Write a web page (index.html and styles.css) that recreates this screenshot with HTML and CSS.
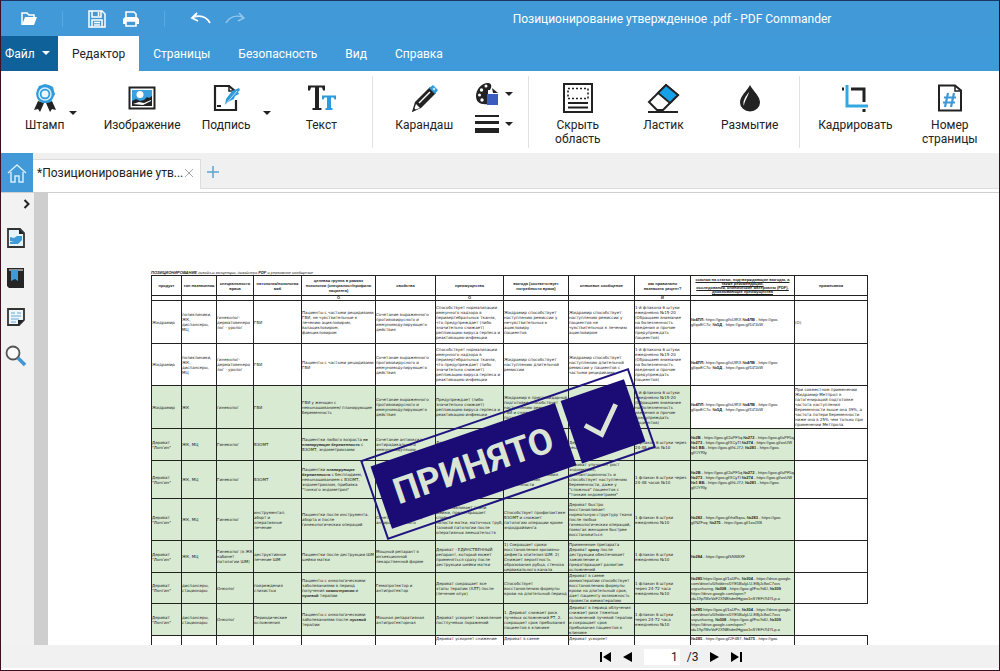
FILE: index.html
```html
<!DOCTYPE html>
<html lang="ru">
<head>
    <meta charset="UTF-8">
    <meta name="viewport" content="width=device-width, initial-scale=1.0">
    <title>Позиционирование утвержденное .pdf - PDF Commander</title>
    <link rel="stylesheet" href="styles.css">
</head>
<body>
    <header class="titlebar">
        <div class="quick">
            <button class="open" aria-label="Открыть">
                <svg width="18" height="16" viewBox="0 0 18 16"><path d="M2 14V2h5l2 2h5v2" fill="none" stroke="#fff" stroke-width="1.5"/><path d="M5 6h12l-3 8H2z" fill="#fff"/></svg>
            </button>
            <span class="line"></span>
            <button class="save" aria-label="Сохранить">
                <svg width="18" height="18" viewBox="0 0 18 18"><path d="M1 1h13l3 3v13H1zM4 1v6h9V1M4 17v-7h10v7M6 12.500h6M6 15h6M10.500 2v4" fill="none" stroke="#fff" stroke-width="1.5"/></svg>
            </button>
            <button class="print" aria-label="Печать">
                <svg width="18" height="18" viewBox="0 0 18 18"><path d="M4 7V2h8l2 2v3" fill="none" stroke="#fff" stroke-width="1.600"/><path d="M3 7h12l2 2v5h-3v-3H4v3H1V9z" fill="#fff"/><path d="M4 11h10v5H4z" fill="none" stroke="#fff" stroke-width="1.600"/></svg>
            </button>
            <span class="line"></span>
            <button class="undo" aria-label="Отменить">
                <svg width="22" height="14" viewBox="0 0 22 14"><path d="M7 1L2 6l6 3M2.500 5.500C9 3 16 4 20 11" fill="none" stroke="#fff" stroke-width="1.800"/></svg>
            </button>
            <button class="redo" aria-label="Повторить">
                <svg width="22" height="14" viewBox="0 0 22 14"><path d="M15 1l5 5-6 3M19.500 5.500C13 3 6 4 2 11" fill="none" stroke="#8fc6ee" stroke-width="1.500"/></svg>
            </button>
        </div>
        <h1>Позиционирование утвержденное .pdf - PDF Commander</h1>
    </header>

    <nav class="menu">
        <button class="file">Файл <i class="arrow"></i></button>
        <button class="active">Редактор</button>
        <button>Страницы</button>
        <button>Безопасность</button>
        <button>Вид</button>
        <button>Справка</button>
    </nav>

    <div class="ribbon">
        <div class="group insert">
            <div class="split first">
                <button class="tool">
                    <svg width="30" height="32" viewBox="0 0 30 32"><path d="M8 19l-4 9 4-1 2 3 4-9zM22 19l4 9-4-1-2 3-4-9z" fill="#222"/><path d="M15 2l4 1 4 2 1 4 1 3-2 4-2 4-4 1h-4l-4-2-2-3-1-4 1-4 2-4 3-1z" fill="#2f9bdc"/><circle cx="15" cy="12" r="6" fill="none" stroke="#d9f0fc" stroke-width="1.500"/><circle cx="15" cy="12" r="3.500" fill="#e8f6fd"/></svg>
                    <span>Штамп</span>
                </button>
                <button class="drop" aria-label="Выбрать штамп"><i class="arrow"></i></button>
            </div>
            <button class="tool">
                <svg width="30" height="32" viewBox="0 0 30 32"><path d="M2.500 5.500h25v21h-25z" fill="#fff" stroke="#222" stroke-width="2"/><path d="M5 8h20v16H5z" fill="#3aa0e0"/><circle cx="13" cy="12.500" r="3.500" fill="#fff"/><path d="M5 19l4-2 4 2 4-1 3-3 2 1 3-2v10H5z" fill="#222"/><path d="M6 22l6-2 5 1 7-3v1l-8 4z" fill="#fff"/></svg>
                <span>Изображение</span>
            </button>
            <div class="split">
                <button class="tool">
                    <svg width="30" height="32" viewBox="0 0 30 32"><path d="M25 18v10H4V4h14l6 5" fill="none" stroke="#222" stroke-width="2.200"/><path d="M18 3v6h5" fill="none" stroke="#222" stroke-width="1.500"/><path d="M14 23l1-6 6-8 7-3 1 2-2 2 1 2-4 2-1 3-6 3z" fill="#2f9bdc"/><path d="M14 23L26 9" stroke="#bfe3f7"/><path d="M6 24h4" stroke="#222" stroke-width="2"/></svg>
                    <span>Подпись</span>
                </button>
                <button class="drop" aria-label="Выбрать подпись"><i class="arrow"></i></button>
            </div>
            <button class="tool">
                <svg width="30" height="32" viewBox="0 0 30 32"><path d="M2 3.500h17v5h-2l-1-3h-3V26h2.500v2h-9v-2H9V5.500H5l-1 3H2z" fill="#222"/><path d="M16 13.500h14v4h-1.500l-1-2H25V26h1.500v2h-7v-2H21V15.500h-2.500l-1 2H16z" fill="#2f9bdc"/></svg>
                <span>Текст</span>
            </button>
        </div>
        <div class="group draw">
            <button class="tool">
                <svg width="30" height="32" viewBox="0 0 30 32"><path d="M3 30l3-10L21 5l6 6-15 15z" fill="#222"/><path d="M5 28l2-6 4 4z" fill="#fff"/><path d="M3 30l2-4 2 2z" fill="#222"/><path d="M10 21L21 10" stroke="#fff" stroke-width="1.500"/><path d="M20 6l4-3 5 5-3 4z" fill="#2f9bdc"/><circle cx="25" cy="7" r="1.300" fill="#bfe3f7"/></svg>
                <span>Карандаш</span>
            </button>
            <div class="options">
                <button aria-label="Цвет">
                    <svg width="24" height="24" viewBox="0 0 24 24"><path d="M15 8c2-3 2-7-2-7C6 1 1 8 1 14c0 6 4 9 12 8V8z" fill="#222"/><g fill="#fff"><circle cx="11" cy="4" r="1.500"/><circle cx="6.500" cy="8" r="1.700"/><circle cx="4.500" cy="13" r="1.500"/><circle cx="7" cy="18" r="1.700"/></g><path d="M12 12h11v11H12z" fill="#3b5bbf"/><path d="M17 6l6 5h-5z" fill="#222"/></svg>
                    <i class="arrow"></i>
                </button>
                <button aria-label="Толщина">
                    <svg width="24" height="20" viewBox="0 0 24 20"><path d="M0 1h24v2H0zM0 7h24v3H0zM0 14h24v5H0z" fill="#222"/></svg>
                    <i class="arrow"></i>
                </button>
            </div>
        </div>
        <div class="group hide">
            <button class="tool">
                <svg width="32" height="32" viewBox="0 0 32 32"><path d="M2 2h28v28H2z" fill="none" stroke="#222" stroke-width="2"/><path d="M6 6.500h20v10H6z" fill="none" stroke="#222" stroke-width="1.600" stroke-dasharray="2 2"/><path d="M6 21h20M6 25.500h20" stroke="#222" stroke-width="2"/></svg>
                <span>Скрыть<br>область</span>
            </button>
            <button class="tool">
                <svg width="34" height="32" viewBox="0 0 34 32"><path d="M3 20L20 3l12 10-15 15h-6z" fill="#fff" stroke="#222" stroke-width="2"/><path d="M20 3l12 10-8 8-12-10z" fill="#15a0e8" stroke="#222" stroke-width="1.800"/><path d="M2 30h30" stroke="#222" stroke-width="2"/></svg>
                <span>Ластик</span>
            </button>
            <button class="tool">
                <svg width="24" height="32" viewBox="0 0 24 32"><path d="M12 3c3 6 10 11 10 17.500a10 9 0 0 1-20 0C2 14 9 9 12 3z" fill="#222"/><path d="M6 24c-2-5 2-10 5-14-1 5-5 9-5 14z" fill="#fff"/></svg>
                <span>Размытие</span>
            </button>
        </div>
        <div class="group pages">
            <button class="tool">
                <svg width="30" height="32" viewBox="0 0 30 32"><path d="M11 7h13v13M2 7h2M24 27v3" fill="none" stroke="#222" stroke-width="3"/><path d="M7 3v21h21" fill="none" stroke="#33a7e0" stroke-width="3"/></svg>
                <span>Кадрировать</span>
            </button>
            <button class="tool">
                <svg width="26" height="32" viewBox="0 0 26 32"><path d="M2 3.500h16l6 5v20H2z" fill="none" stroke="#222" stroke-width="2"/><path d="M18 3v6h6" fill="none" stroke="#222" stroke-width="1.500"/><path d="M11 11L8 25M17 11l-3 14M7 15.500h12M6 20.500h12" stroke="#3f97d6" stroke-width="2.200"/></svg>
                <span>Номер<br>страницы</span>
            </button>
        </div>
    </div>

    <div class="tabstrip">
        <button class="home" aria-label="Главная">
            <svg width="20" height="20" viewBox="0 0 20 20"><path d="M1 10l9-8 9 8M4 9v10h4v-6h4v6h4V9" fill="none" stroke="#d6edfb" stroke-width="1.500"/></svg>
        </button>
        <div class="tabs">
            <div class="tab">*Позиционирование утв... <button aria-label="Закрыть"><svg width="10" height="10" viewBox="0 0 10 10"><path d="M1 1l8 8M9 1L1 9" stroke="#a8a8a8"/></svg></button></div>
            <button class="add" aria-label="Новая вкладка"><svg width="12" height="12" viewBox="0 0 12 12"><path d="M6 0v12M0 6h12" stroke="#5ba3d0" stroke-width="1.500"/></svg></button>
        </div>
    </div>

    <div class="workspace">
        <aside class="sidebar">
            <button class="expand" aria-label="Развернуть"><svg width="8" height="10" viewBox="0 0 8 10"><path d="M1.500 1l4 4-4 4" fill="none" stroke="#222" stroke-width="2"/></svg></button>
            <button aria-label="Миниатюры"><svg width="20" height="22" viewBox="0 0 20 22"><path d="M2 2h12l4 4v14H2z" fill="#e6f3fb" stroke="#333" stroke-width="1.800"/><path d="M13 2v5h5z" fill="#222"/><path d="M4 10l4 1 3-2h5v4l-4 4H4v-2l4-1H4z" fill="#3f9bd8"/></svg></button>
            <button aria-label="Закладки"><svg width="20" height="22" viewBox="0 0 20 22"><path d="M1 1h17v20H3l-2-2z" fill="#252525"/><path d="M3 3h14" stroke="#fff"/><path d="M5 3h7v11l-3-2-4 2z" fill="#3f9bd8"/></svg></button>
            <button aria-label="Комментарии"><svg width="20" height="20" viewBox="0 0 20 20"><path d="M2 2h16v11l-5 5H2z" fill="#edf6fb" stroke="#333" stroke-width="1.800"/><path d="M5 6h4m2 0h4M5 9h10M5 12h8M5 15h5" stroke="#6aa9d2" stroke-width="1.200"/><path d="M12 18v-5h6z" fill="#222"/></svg></button>
            <button aria-label="Поиск"><svg width="22" height="22" viewBox="0 0 22 22"><circle cx="8" cy="8" r="6.500" fill="#fafafa" stroke="#555" stroke-width="1.800"/><path d="M13 13l7 7" stroke="#3f97d6" stroke-width="3.500"/></svg></button>
        </aside>
        <main class="viewer">
            <div class="page">
                <p class="heading"><b>ПОЗИЦИОНИРОВАНИЕ</b> дизайн-и концепции, дизайнера <b>PDF</b> и рекламное сообщение</p>
                <table>
                    <colgroup>
                        <col class="c1"><col class="c2"><col class="c3"><col class="c4"><col class="c5"><col class="c6">
                        <col class="c7"><col class="c8"><col class="c9"><col class="c10"><col class="c11"><col class="c12">
                    </colgroup>
                    <thead>
                        <tr class="h20">
                            <th>продукт</th><th>тип назначения</th><th>специальность<br>врача</th><th>патология/нозология<br>мкб</th>
                            <th>целевая группа в рамках<br>нозологии (специалист/профиль<br>пациента)</th><th>свойства</th><th>преимущества</th>
                            <th>выгода (соответствует<br>потребности врача)</th><th>ключевое сообщение</th><th>как правильно<br>назначить рецепт?</th>
                            <th class="links">ссылки на статьи, подтверждающие выгоды, а<br>также рекомендации,<br>исследования, клинические материалы (PDF),<br>доказывающие преимущества</th><th>примечания</th>
                        </tr>
                        <tr class="h5"><th></th><th></th><th></th><th></th><th>О</th><th></th><th>О</th><th></th><th></th><th>И</th><th></th><th></th></tr>
                    </thead>
                    <tbody>
                        <tr class="h43">
                            <td>Жидрамир</td><td>поликлиники,<br>ЖК,<br>диспансеры,<br>МЦ</td><td>гинеколог-<br>дерматовенеро<br>лог - уролог</td><td>ГВИ</td>
                            <td>Пациенты с частыми рецидивами<br>ГВИ, не чувствительные к<br>лечению ацикловиром,<br>валацикловиром,<br>фамцикловиром</td>
                            <td>Сочетание выраженного<br>противовирусного и<br>иммуномодулирующего<br>действия</td>
                            <td>Способствует нормализации<br>иммунного надзора в<br>перивертебральных тканях,<br>что предупреждает (либо<br>значительно снижает)<br>репликацию вируса герпеса и<br>реактивацию инфекции</td>
                            <td>Жидрамир способствует<br>наступлению ремиссии у<br>нечувствительных к<br>ацикловиру<br>пациентов</td>
                            <td>Жидрамир способствует<br>наступлению ремиссии у<br>пациентов не<br>чувствительных к лечению<br>ацикловиром</td>
                            <td>1-й флакона 6 штуки<br>ежедневно №15-20<br>(Обращаем внимание<br>на болезненность<br>введения и прочие<br>предупреждать<br>пациентов)</td>
                            <td><b>№4ПЛ:</b> https://goo.gl/sUfRX <b>№4ЛВ</b> - https://goo.<br>gl/qwEC7u; <b>№5Д</b> - https://goo.gl/DZ1kW</td><td>(О)</td>
                        </tr>
                        <tr class="h42">
                            <td>Жидрамир</td><td>поликлиники,<br>ЖК,<br>диспансеры,<br>МЦ</td><td>гинеколог-<br>дерматовенеро<br>лог - уролог</td><td>ГВИ</td>
                            <td>Пациенты с частыми рецидивами<br>ГВИ</td>
                            <td>Сочетание выраженного<br>противовирусного и<br>иммуномодулирующего<br>действия</td>
                            <td>Способствует нормализации<br>иммунного надзора в<br>перивертебральных тканях,<br>что предупреждает (либо<br>значительно снижает)<br>репликацию вируса герпеса и<br>реактивацию инфекции</td>
                            <td>Жидрамир способствует<br>наступлению длительной<br>ремиссии</td>
                            <td>Жидрамир способствует<br>наступлению длительной<br>ремиссии у пациентов с<br>частыми рецидивами</td>
                            <td>1-й флакона 6 штуки<br>ежедневно №15-20<br>(Обращаем внимание<br>на болезненность<br>введения и прочие<br>предупреждать<br>пациентов)</td>
                            <td><b>№4ПЛ:</b> https://goo.gl/sUfRX <b>№4ЛВ</b> - https://goo.<br>gl/qwEC7u; <b>№5Д</b> - https://goo.gl/DZ1kW</td><td></td>
                        </tr>
                        <tr class="h43 green plain">
                            <td>Жидрамир</td><td>ЖК</td><td>гинеколог</td><td>ГВИ</td>
                            <td>ГВИ у женщин с<br>невынашиванием/ планирующие<br>беременность</td>
                            <td>Сочетание выраженного<br>противовирусного и<br>иммуномодулирующего<br>действия</td>
                            <td>Предупреждает (либо<br>значительно снижает)<br>репликацию вируса герпеса и<br>реактивацию инфекции</td>
                            <td>Жидрамир в прегравидарной<br>подготовке способствует<br>наступлению ремиссии<br>ГВИ и снижает риск<br>потери</td>
                            <td>Жидрамир в программе<br>подготовки способствует<br>вынашиванию<br>беременности</td>
                            <td>1-й флакона 6 штуки<br>ежедневно №15-20<br>(Обращаем внимание<br>на болезненность<br>введения и прочие<br>предупреждать<br>пациентов)</td>
                            <td><b>№4ПЛ:</b> https://goo.gl/sUfRX <b>№4ЛВ</b> - https://goo.<br>gl/qwEC7u; <b>№5Д</b> - https://goo.gl/DZ1kW</td>
                            <td>При совместном применении<br>Жидрамир-Метпрол в<br>патогенираций подготовке<br>частота наступления<br>беременности выше она 39%, а<br>частота потери беременности<br>ниже она в 25% чем только при<br>применении Метпрола</td>
                        </tr>
                        <tr class="h32 green">
                            <td>Дериват<br>"Лонгин"</td><td>ЖК, МЦ</td><td>Гинеколог</td><td>ВЗОМТ</td>
                            <td>Пациентки любого возраста <b>не<br>планирующие беременность</b> с<br>ВЗОМТ, эндометриозами</td>
                            <td>Сочетание антиоксид-<br>антирадикального<br>иммуномодуляции</td><td>Дериват создает условия<br>для нормализации</td><td>Дериват способствует<br>профилактике ВЗОМТ</td><td>Дериват предотвращает<br>рецидивы ВЗОМТ</td>
                            <td>1 флакон 6 штуки через<br>24-48 часов №10</td>
                            <td><b>№2В</b> - https://goo.gl/2aPF5q <b>№272</b> - https://goo.gl/aPF5q<br><b>№273</b> - https://goo.gl/XCyTl <b>№274</b> - https://goo.gl/wsUW<br><b>№1 ВБ</b> - https://goo.gl/hLJ7J; <b>№281</b> - https://goo.<br>gl/OYRly</td><td></td>
                        </tr>
                        <tr class="h38 green">
                            <td>Дериват<br>"Лонгин"</td><td>ЖК, МЦ</td><td>Гинеколог</td><td>ВЗОМТ</td>
                            <td>Пациентки <b>планирующие<br>беременность</b> с бесплодием,<br>невынашиванием с ВЗОМТ,<br>эндометриозом, прибавка<br>"тонкого эндометрия"</td>
                            <td>Сочетание антиоксид-<br>антирадикального</td><td>Нормализует структуру<br>эндометрия</td><td>Дериват создает условия<br>для наступления<br>беременности</td>
                            <td>Дериват улучшает рост<br>эндометрия,<br>имплантационность и<br>способствует наступлению<br>беременности, даже у<br>"сложных" пациенток с<br>"тонким эндометрием"</td>
                            <td>1 флакон 6 штуки через<br>24-48 часов №10</td>
                            <td><b>№2В</b> - https://goo.gl/2aPF5q <b>№272</b> - https://goo.gl/aPF5q<br><b>№273</b> - https://goo.gl/XCyTl <b>№274</b> - https://goo.gl/wsUW<br><b>№1 ВБ</b> - https://goo.gl/hLJ7J; <b>№281</b> - https://goo.<br>gl/OYRly</td><td></td>
                        </tr>
                        <tr class="h42 green">
                            <td>Дериват<br>"Лонгин"</td><td>ЖК, МЦ</td><td>Гинеколог</td><td>инструментал.<br>аборт и<br>оперативные<br>лечение</td>
                            <td>Пациентки после инструмента.<br>аборта и после<br>гинекологических операций</td>
                            <td>Сочетание антиоксид-<br>антирадикального</td><td>Восстанавливает ткани<br>шейки, предотвращает<br>спайки<br>полости матки, маточных труб,<br>тазовой патологии после<br>оперативных вмешательств</td>
                            <td>Способствует профилактике<br>ВЗОМТ и снижает<br>патологию операции кроме<br>эндодрайвинга</td>
                            <td>Дериват быстро<br>восстанавливает<br>нормальную структуру ткани<br>после любых<br>гинекологических операций,<br>помогая женщине быстрее<br>восстановиться</td>
                            <td>1 флакон 6 штуки<br>ежедневно №10</td>
                            <td><b>№282</b> - https://goo.gl/rhdSqsa, <b>№283</b> - https://goo.<br>gl/NZFxq; <b>№275</b> - https://goo.gl/1xoJXB</td><td></td>
                        </tr>
                        <tr class="h32 green">
                            <td>Дериват<br>"Лонгин"</td><td>ЖК, МЦ</td><td>Гинеколог (в ЖК<br>кабинет<br>патологии ШМ)</td><td>деструктивное<br>лечение ШМ</td>
                            <td>Пациентки после деструкции ШМ<br>шейки матки</td>
                            <td>Мощный репарант в<br>инъекционной<br>лекарственной форме</td><td>Дериват - ЕДИНСТВЕННЫЙ<br>репарант, который может<br>применяться сразу после<br>деструкции шейки матки</td>
                            <td>1) Сокращает сроки<br>восстановления эрозивно-<br>дефекта эпителия ШМ. 2)<br>Снижает вероятность<br>образования рубца, стеноза<br>цервикального канала</td>
                            <td>Применение препарата<br>Дериват <b>сразу</b> после<br>деструкции обеспечивает<br>заживление и<br>предотвращает развитие<br>осложнений</td>
                            <td>1 флакон 6 штуки<br>ежедневно №10</td><td><b>№284</b> - https://goo.gl/kNSBXF</td><td></td>
                        </tr>
                        <tr class="h31 green">
                            <td>Дериват<br>"Лонгин"</td><td>диспансеры,<br>стационары</td><td>Онколог</td><td>повреждения<br>слизистых</td>
                            <td>Пациенты с онкологическими<br>заболеваниями в период<br>получения <b>химиотерапии</b> и<br><b>лучевой</b> терапии</td>
                            <td>Гемопротектор и<br>антипротектор</td><td>Дериват сокращает все<br>этапы терапии (ХЛТ) после<br>(лечение опух)</td>
                            <td>Способствует<br>восстановлению формулы<br>крови на длительный период</td>
                            <td>Дериват в схеме<br>химиотерапии способствует<br>восстановлению формулы<br>крови на длительный срок,<br>дает пациенту возможность<br>провести химиотерапию</td>
                            <td>1 флакон 6 штуки<br>через 24-72 часа<br>ежедневно №10</td>
                            <td><b>№285</b> https://goo.gl/1aUPn, <b>№304</b> - https://drive.google.<br>com/drive/u/0/folders/0YE5BaIyLU-EBjJc8wC7xvs<br>usp=sharing, <b>№308</b> - https://goo.gl/Fxc9dU, <b>№309</b><br>https://drive.google.com/open?<br>id=19p7MeVoF2XNBhdmlHgjwx1nSYEFt7l4YLp-o</td><td></td>
                        </tr>
                        <tr class="h32 green cut">
                            <td>Дериват<br>"Лонгин"</td><td>диспансеры,<br>стационары</td><td>Онколог</td><td>Периодические<br>осложнения</td>
                            <td>Пациенты с онкологическими<br>заболеваниями после <b>лучевой</b><br>терапии</td>
                            <td>Мощная репаративная<br>антипротекторная</td><td>Дериват ускоряет заживление<br>постлучевых поражений</td>
                            <td>1. Дериват снижает риск<br>лучевых осложнений РТ, 2.<br>сокращает срок пребывания<br>пациентов в клинике</td>
                            <td>Дериват в период облучения<br>снижает риск тяжелых<br>осложнений лучевой терапии<br>и сокращает срок<br>пребывания пациентов в<br>клинике</td>
                            <td>1 флакон 6 штуки<br>через 24-72 часа<br>ежедневно №10</td>
                            <td><b>№285</b> https://goo.gl/1aUPn, <b>№304</b> - https://drive.google.<br>com/drive/u/0/folders/0YE5BaIyLU-EBjJc8wC7xvs<br>usp=sharing, <b>№308</b> - https://goo.gl/Fxc9dU, <b>№309</b><br>https://drive.google.com/open?<br>id=19p7MeVoF2XNBhdmlHgjwx1nSYEFt7l4YLp-o</td><td></td>
                        </tr>
                        <tr class="h32 last">
                            <td></td><td></td><td></td><td></td><td></td><td></td><td>Дериват ускоряет снижение</td><td>Дериват в схеме</td><td>Дериват ускоряет</td><td></td>
                            <td><b>№285</b> - https://goo.gl/2F4B7, <b>№275</b> - https://goo.</td><td></td>
                        </tr>
                    </tbody>
                </table>
                <div class="stamp">
                    <span class="word">ПРИНЯТО</span>
                    <span class="check"><svg width="46" height="46" viewBox="0 0 46 46"><path d="M4 21l13 14L40 11" fill="none" stroke="#dbe5d6" stroke-width="5"/></svg></span>
                </div>
            </div>
        </main>
    </div>

    <footer class="statusbar">
        <div class="pager">
            <button aria-label="Первая страница"><svg width="12" height="10" viewBox="0 0 12 10"><path d="M0 0h2v10H0zM11 0v10L3 5z"/></svg></button>
            <button aria-label="Предыдущая страница"><svg width="12" height="10" viewBox="0 0 12 10"><path d="M10 0v10L1 5z"/></svg></button>
            <label><input type="text" value="1" aria-label="Страница"> /3</label>
            <button aria-label="Следующая страница"><svg width="12" height="10" viewBox="0 0 12 10"><path d="M2 0v10l9-5z"/></svg></button>
            <button aria-label="Последняя страница"><svg width="12" height="10" viewBox="0 0 12 10"><path d="M10 0h2v10h-2zM1 0v10l8-5z"/></svg></button>
        </div>
    </footer>
</body>
</html>
```

FILE: styles.css
```css
* {
    box-sizing: border-box;
}
body {
    margin: 0;
    height: 100vh;
    display: flex;
    flex-direction: column;
    overflow: hidden;
    border: 1px solid #3d0f20;
    border-top-color: #1b3564;
    background: #fff;
    color: #222;
    font-family: Roboto, "Liberation Sans", sans-serif;
    font-size: 12px;
}
button {
    margin: 0;
    padding: 0;
    border: 0;
    background: none;
    color: inherit;
    font: inherit;
}
svg {
    display: block;
}
.arrow {
    display: inline-block;
    border: 4px solid transparent;
    border-top: 4px solid currentColor;
    border-bottom: 0;
}

/* title bar */
.titlebar {
    flex: none;
    display: flex;
    align-items: center;
    height: 35px;
    background: #4199d7;
    color: #fff;
}
.quick {
    display: flex;
    align-items: center;
    width: 344px;
    padding-left: 19px;
}
.quick .line {
    width: 1px;
    height: 16px;
    margin: 0 25px 0 24px;
    background: #5aa8de;
}
.quick .print {
    margin-left: 16px;
}
.quick .redo {
    margin-left: 12px;
}
.titlebar h1 {
    flex: 1;
    margin: 0;
    font-size: 12px;
    font-weight: normal;
    text-align: center;
}

/* menu */
.menu {
    flex: none;
    display: flex;
    height: 35px;
    background: #409ad9;
    color: #fff;
}
.menu button {
    padding: 0 14px;
}
.menu .file {
    width: 57px;
    padding: 0 4px;
    background: #0e6199;
    text-align: left;
}
.menu .file .arrow {
    margin-left: 4px;
    vertical-align: 3px;
}
.menu .active {
    background: #fff;
    color: #222;
}

/* ribbon */
.ribbon {
    flex: none;
    display: grid;
    grid-template-columns: 372fr 156fr 271fr 199fr;
    height: 82px;
    padding: 5px 0;
}
.group {
    display: grid;
    align-items: start;
    padding-top: 6px;
    border-right: 1px solid #e2e2e2;
}
.group:last-child {
    border-right: 0;
}
.insert {
    grid-template-columns: 88fr 108fr 74fr 102fr;
}
.draw {
    grid-template-columns: 103fr 53fr;
}
.hide {
    grid-template-columns: 98fr 74fr 99fr;
}
.pages {
    grid-template-columns: 110fr 78fr;
    padding-right: 10px;
}
.tool {
    display: flex;
    flex-direction: column;
    align-items: center;
    gap: 4px;
    font-size: 12px;
    line-height: 14px;
}
.split {
    display: flex;
    align-items: center;
    gap: 12px;
    padding-left: 6px;
}
.split.first {
    gap: 5px;
    padding-left: 24px;
}
.drop {
    padding-top: 8px;
}
.options {
    display: grid;
    gap: 8px;
}
.options button {
    display: flex;
    align-items: center;
    gap: 6px;
}

/* document tabs */
.tabstrip {
    flex: none;
    display: flex;
    height: 39px;
}
.home {
    display: flex;
    align-items: center;
    justify-content: center;
    width: 32px;
    background: #4199d7;
}
.tabs {
    flex: 1;
    display: flex;
    align-items: flex-end;
    height: 36px;
    border-bottom: 1px solid #dcdcdc;
    background: #f0f0f0;
}
.tab {
    display: flex;
    align-items: center;
    gap: 1px;
    height: 30px;
    margin-bottom: -1px;
    padding: 0 6px 4px 4px;
    border: 1px solid #dcdcdc;
    border-width: 1px 1px 0 0;
    background: #fff;
}
.add {
    padding: 0 6px 10px;
}

/* workspace */
.workspace {
    flex: 1;
    display: flex;
    min-height: 0;
    border-top: 1px solid #cfcfcf;
}
.sidebar {
    display: flex;
    flex-direction: column;
    align-items: center;
    gap: 18px;
    width: 33px;
    padding: 6px 3px 0 0;
    background: #f2f2f2;
}
.sidebar .expand {
    align-self: flex-end;
}
.viewer {
    flex: 1;
    min-width: 0;
    padding-left: 14px;
    overflow: hidden;
    background: #cecece;
}
.page {
    position: relative;
    height: 100%;
    padding: 77px 0 0 103px;
    overflow: hidden;
    background: #fff;
    font-family: "DejaVu Sans", "Liberation Sans", sans-serif;
    font-size: 4px;
    line-height: 5px;
    white-space: nowrap;
}
.heading {
    margin: 0;
    font-family: "Liberation Sans", sans-serif;
    font-style: italic;
    text-decoration: underline;
}
table {
    width: 716px;
    table-layout: fixed;
    border-collapse: collapse;
}
th, td {
    padding: 0;
    border: 1px solid #222;
    text-align: left;
}
th {
    font-family: "Liberation Sans", sans-serif;
    text-align: center;
}
th.links {
    line-height: 4px;
    text-decoration: underline;
}
td b,
td:nth-child(11) {
    font-family: "Liberation Sans", sans-serif;
}
.c1 { width: 30px; }
.c2 { width: 35px; }
.c3 { width: 37px; }
.c4 { width: 48px; }
.c5 { width: 74px; }
.c6 { width: 60px; }
.c7 { width: 68px; }
.c8 { width: 65px; }
.c9 { width: 66px; }
.c10 { width: 56px; }
.c11 { width: 104px; }
.c12 { width: 73px; }
.h20 { height: 20px; }
.h5 { height: 5px; line-height: 4px; }
.h31 { height: 31px; }
.h32 { height: 32px; }
.h38 { height: 38px; }
.h42 { height: 42px; }
.h43 { height: 43px; }
.green td {
    background: #d9ead3;
}
.green td:last-child,
.plain td:nth-child(11) {
    background: #fff;
}
.cut td:last-child {
    border-right: 0;
}
.last td {
    vertical-align: top;
}

/* stamp over the page */
.stamp {
    position: absolute;
    top: 219px;
    left: 318px;
    display: flex;
    gap: 6px;
    width: 284px;
    height: 84px;
    padding: 7px 6px;
    border: 2px solid #1f1480;
    color: #dbe5d6;
    transform: rotate(-19deg);
}
.stamp span {
    display: flex;
    align-items: center;
    justify-content: center;
    background: #1b0b75;
}
.stamp .word {
    flex: 1;
    font-family: Roboto, "Liberation Sans", sans-serif;
    font-size: 36px;
    font-weight: bold;
}
.stamp .check {
    width: 67px;
}

/* status bar */
.statusbar {
    flex: none;
    height: 25px;
    border-bottom: 2px solid #fff;
    background: #f1f1f1;
    font-size: 12px;
}
.pager {
    display: flex;
    align-items: center;
    gap: 10px;
    height: 100%;
    margin-left: 60%;
}
.pager input {
    width: 36px;
    height: 16px;
    margin: 0 4px 0 0;
    padding: 0 2px;
    border: 0;
    background: #fff;
    color: inherit;
    font: inherit;
    text-align: right;
}
```
